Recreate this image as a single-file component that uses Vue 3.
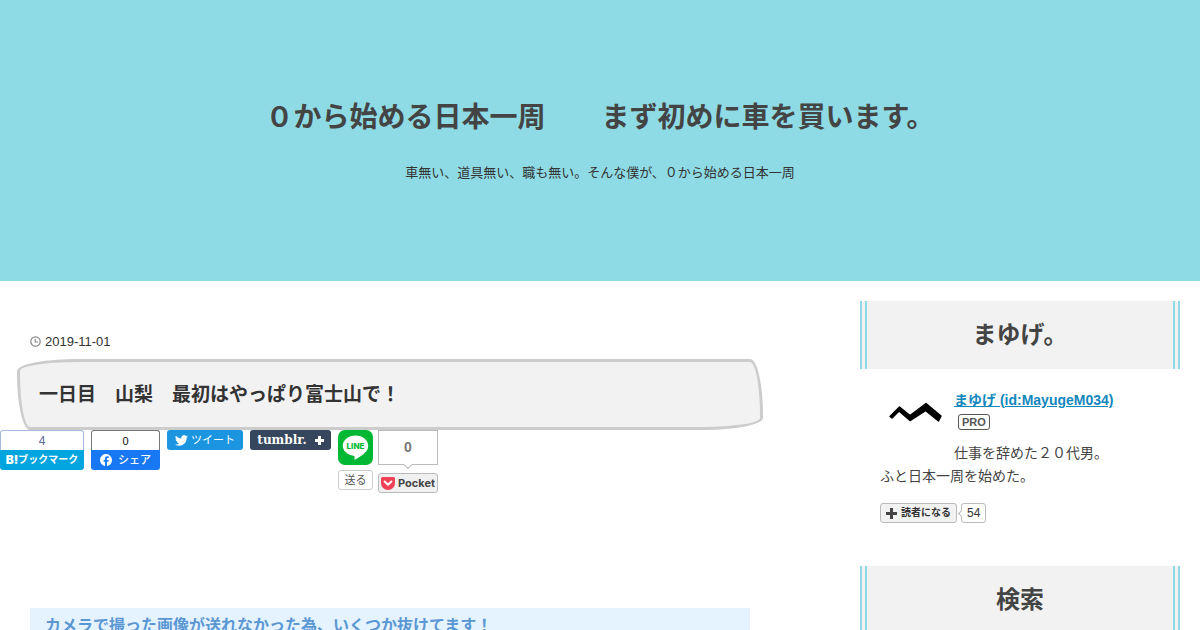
<script setup>
const blog = {
  lead: '０から始める日本一周',
  rest: 'まず初めに車を買います。',
  description: '車無い、道具無い、職も無い。そんな僕が、０から始める日本一周',
}
</script>

<template>
  <div class="page">
    <header class="blog-header">
      <h1><a href="#"><span>{{ blog.lead }}</span><span>{{ blog.rest }}</span></a></h1>
      <p>{{ blog.description }}</p>
    </header>

    <div class="content">
      <main class="article">
        <a class="date" href="#">
          <svg width="11" height="11" viewBox="0 0 11 11" aria-hidden="true">
            <circle cx="5.5" cy="5.5" r="4.7" fill="none" stroke="#888" stroke-width="1.2" />
            <path d="M5.2 2.8V6H8" fill="none" stroke="#888" stroke-width="1.1" />
          </svg>
          <time datetime="2019-11-01">2019-11-01</time>
        </a>
        <h2 class="entry-title"><a href="#">一日目　山梨　最初はやっぱり富士山で！</a></h2>

        <div class="shares">
          <div class="counter hatena">
            <a class="count" href="#">4</a>
            <button type="button"><b>B!</b><span>ブックマーク</span></button>
          </div>
          <div class="counter facebook">
            <a class="count" href="#">0</a>
            <button type="button">
              <svg width="12" height="12" viewBox="0 0 24 24" aria-hidden="true">
                <path fill="#fff" d="M24 12a12 12 0 1 0-13.9 11.9v-8.4H7.1V12h3V9.4c0-3 1.8-4.7 4.6-4.7 1.3 0 2.7.2 2.7.2v3h-1.5c-1.5 0-2 .9-2 1.9V12h3.4l-.6 3.5h-2.8v8.4A12 12 0 0 0 24 12z" />
              </svg>
              <span>シェア</span>
            </button>
          </div>
          <button class="tweet" type="button">
            <svg width="13" height="11" viewBox="0 0 24 20" aria-hidden="true">
              <path fill="#fff" d="M24 2.4a10 10 0 0 1-2.8.8A5 5 0 0 0 23.3.5a10 10 0 0 1-3.1 1.2 4.9 4.9 0 0 0-8.4 4.5A14 14 0 0 1 1.7 1a4.9 4.9 0 0 0 1.5 6.6A5 5 0 0 1 1 7v.1a4.9 4.9 0 0 0 3.9 4.8 5 5 0 0 1-2.2.1 4.9 4.9 0 0 0 4.6 3.4A9.9 9.9 0 0 1 0 17.5 14 14 0 0 0 21.5 5.1 10 10 0 0 0 24 2.4z" />
            </svg>
            <span>ツイート</span>
          </button>
          <button class="tumblr" type="button">
            <span>tumblr.</span>
            <svg width="9" height="9" viewBox="0 0 9 9" aria-hidden="true"><path d="M4.5 0v9M0 4.5h9" stroke="#fff" stroke-width="3" /></svg>
          </button>
          <div class="pair">
            <div class="line">
              <a class="line-logo" href="#" aria-label="LINE">
                <svg width="35" height="35" viewBox="0 0 35 35">
                  <rect width="35" height="35" rx="7" fill="#00b833" />
                  <path d="M17.5 5.5C10.500 5.500 4.800 10 4.800 15.700c0 5 4.500 9.200 10.600 10 1.500.3 1.300 1 1 2.900-.1.800 0 1.300.9.900 1.500-.7 7.800-4.500 10.800-8 1.500-1.700 2.100-3.600 2.100-5.800 0-5.700-5.700-10.200-12.700-10.200z" fill="#fff" />
                  <text x="17.500" y="19" text-anchor="middle" font-size="8" font-weight="800" fill="#00b833">LINE</text>
                </svg>
              </a>
              <button type="button">送る</button>
            </div>
            <div class="pocket">
              <a class="bubble" href="#">0</a>
              <button type="button">
                <svg width="14" height="13" viewBox="0 0 14 13" aria-hidden="true">
                  <path d="M1.500 0h11Q14 0 14 1.500V6a7 7 0 0 1-14 0V1.500Q0 0 1.500 0z" fill="#ee4056" />
                  <path d="M3.600 4.500 7 7.800l3.400-3.300" fill="none" stroke="#fff" stroke-width="2" stroke-linecap="round" stroke-linejoin="round" />
                </svg>
                <span>Pocket</span>
              </button>
            </div>
          </div>
        </div>

        <h3 class="notice">カメラで撮った画像が送れなかった為、いくつか抜けてます！</h3>
      </main>

      <aside class="sidebar">
        <section>
          <h2 class="module-title">まゆげ。</h2>
          <div class="profile">
            <a class="avatar" href="#" aria-label="まゆげ">
              <svg width="64" height="64" viewBox="0 0 64 64">
                <path d="M10 27.500 19.500 18 30 26.500 46 14.500 61 27 58.500 32 45.500 21.500 30 31.500 19 22 12 29z" fill="#000" stroke="#000" stroke-width="1.500" stroke-linejoin="round" />
              </svg>
            </a>
            <div class="name"><a href="#">まゆげ (id:MayugeM034)</a></div>
            <div class="rank"><a href="#">PRO</a></div>
            <p>仕事を辞めた２０代男。<br>ふと日本一周を始めた。</p>
            <div class="subscribe">
              <button type="button">
                <svg width="11" height="11" viewBox="0 0 11 11" aria-hidden="true"><path d="M5.500 0v11M0 5.500h11" stroke="#444" stroke-width="3" /></svg>
                <span>読者になる</span>
              </button>
              <a class="readers" href="#">54</a>
            </div>
          </div>
        </section>
        <section>
          <h2 class="module-title">検索</h2>
        </section>
      </aside>
    </div>
  </div>
</template>

<style>
body {
  margin: 0;
  background: #fff;
}
</style>

<style scoped>
.page {
  color: #333;
  font-family: "Liberation Sans", "Noto Sans CJK JP", sans-serif;
  font-size: 14px;
}
h1, h2, h3, p {
  margin: 0;
}
a {
  color: inherit;
  text-decoration: none;
}
button {
  display: flex;
  align-items: center;
  justify-content: center;
  box-sizing: border-box;
  height: 20px;
  margin: 0;
  padding: 0;
  border: 0;
  border-radius: 3px;
  font-family: inherit;
  font-size: 11px;
  line-height: 18px;
  white-space: nowrap;
  cursor: pointer;
}
svg {
  display: block;
  flex: none;
}
.blog-header {
  padding: 98px 20px;
  background: #8edbe5;
  text-align: center;
}
.blog-header h1 {
  color: #444;
  font-size: 28px;
  line-height: 40px;
}
.blog-header h1 a {
  display: flex;
  justify-content: center;
  gap: 56px;
}
.blog-header p {
  margin-top: 25px;
  font-size: 13px;
  line-height: 20px;
}
.content {
  display: grid;
  grid-template-columns: minmax(0, 1fr) 320px;
  padding-right: 20px;
}
.article {
  padding: 51px 110px 40px 30px;
}
.date {
  display: flex;
  align-items: center;
  gap: 4px;
  font-size: 13px;
  line-height: 20px;
}
.date svg {
  margin-bottom: 2px;
}
.entry-title {
  margin: 7px -13px 0;
  padding: 19px;
  border: 3px solid #ccc;
  border-radius: 60px 13px 60px 13px / 12px 56px 12px 56px;
  background: #f2f2f2;
  font-size: 19px;
  line-height: 27px;
}
.shares {
  display: flex;
  align-items: flex-start;
  gap: 7px;
  margin-left: -30px;
}
.counter {
  display: flex;
  flex-direction: column;
}
.count {
  box-sizing: border-box;
  height: 20px;
  border: 1px solid #a5b9dc;
  border-bottom: 0;
  border-radius: 3px 3px 0 0;
  background: #fff;
  line-height: 20px;
  text-align: center;
}
.counter button {
  border-radius: 0 0 3px 3px;
  color: #fff;
}
.hatena {
  width: 84px;
}
.hatena .count {
  color: #5a6a96;
  font-size: 12px;
}
.hatena button {
  background: #00a4de;
  font-size: 10px;
  font-weight: 700;
}
.hatena b {
  font-family: Inter, sans-serif;
  font-size: 12px;
}
.facebook {
  width: 69px;
}
.facebook .count {
  border-color: #777;
  color: #111;
  font-size: 11px;
}
.facebook button {
  gap: 6px;
  background: #1877f2;
  font-weight: 500;
}
.tweet {
  gap: 3px;
  width: 76px;
  background: #1b95e0;
  color: #fff;
}
.tumblr {
  gap: 8px;
  width: 81px;
  background: #36465d;
  color: #fff;
  font-family: "DejaVu Serif", serif;
  font-size: 12px;
  font-weight: 700;
}
.pair {
  display: flex;
  gap: 5px;
}
.line {
  display: flex;
  flex-direction: column;
  gap: 5px;
  width: 35px;
}
.line text {
  font-family: Inter, sans-serif;
}
.line button {
  border: 1px solid #ccc;
  background: #fff;
  color: #555;
}
.pocket {
  display: flex;
  flex-direction: column;
  gap: 8px;
  width: 60px;
}
.bubble {
  position: relative;
  box-sizing: border-box;
  height: 35px;
  border: 1px solid #bbb;
  background: #fff;
  color: #777;
  font-size: 14px;
  font-weight: 700;
  line-height: 33px;
  text-align: center;
}
.bubble::after {
  position: absolute;
  bottom: -4px;
  left: 26px;
  width: 5px;
  height: 5px;
  border: solid #bbb;
  border-width: 0 1px 1px 0;
  background: #fff;
  content: "";
  transform: rotate(45deg);
}
.pocket button {
  gap: 3px;
  border: 1px solid #bbb;
  background: #f0f0f0;
  color: #444;
  font-family: Inter, sans-serif;
  font-weight: 700;
  font-size: 11px;
}
.notice {
  margin-top: 115px;
  padding: 0 15px;
  background: #e4f3ff;
  color: #5b97d2;
  font-size: 16px;
  line-height: 36px;
}
.sidebar {
  display: flex;
  flex-direction: column;
  gap: 43px;
  padding-top: 20px;
}
.module-title {
  border: double #8edbe5;
  border-width: 0 7px;
  background: #f2f2f2;
  color: #444;
  font-size: 24px;
  line-height: 68px;
  text-align: center;
}
.profile {
  padding: 20px 20px 0;
  line-height: 23px;
}
.avatar {
  float: left;
  margin-right: 10px;
}
.name {
  color: #1487bd;
  font-weight: 700;
}
.name a {
  text-decoration: underline;
}
.rank {
  display: flex;
  padding: 2px 0 0 4px;
}
.rank a {
  padding: 0 3px;
  border: 1px solid #555;
  border-radius: 3px;
  color: #555;
  font-size: 11px;
  font-weight: 700;
  line-height: 14px;
}
.profile p {
  margin-top: 12px;
  color: #444;
}
.subscribe {
  display: flex;
  gap: 4px;
  margin-top: 15px;
}
.subscribe button {
  gap: 4px;
  width: 77px;
  border: 1px solid #bbb;
  background: #f2f2f2;
  color: #333;
  font-size: 10px;
  font-weight: 700;
}
.readers {
  position: relative;
  padding: 0 5px;
  border: 1px solid #bbb;
  border-radius: 3px;
  font-size: 12px;
  line-height: 18px;
}
.readers::before {
  position: absolute;
  top: 7px;
  left: -3px;
  width: 4px;
  height: 4px;
  border: solid #bbb;
  border-width: 0 0 1px 1px;
  background: #fff;
  content: "";
  transform: rotate(45deg);
}
</style>
